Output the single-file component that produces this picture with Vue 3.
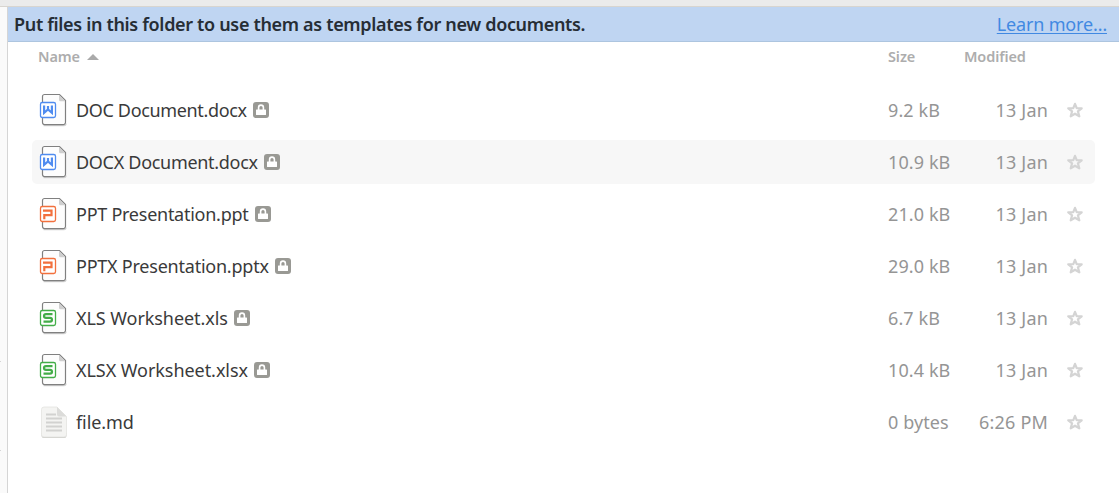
<template>
  <div class="window">
    <div class="toolbar-edge"></div>
    <div class="window-body">
      <aside class="sidebar">
        <span class="sidebar-line"></span>
        <span class="sidebar-line"></span>
      </aside>

      <main class="content">
        <div class="info-bar">
          <span class="info-text">Put files in this folder to use them as templates for new documents.</span>
          <a class="info-link" href="#" @click.prevent>Learn more…</a>
        </div>

        <div class="list-header">
          <div class="header-name">
            <span>Name</span>
            <svg class="sort-arrow" width="12" height="6" viewBox="0 0 12 6"><path d="M0 6L6 0l6 6z" fill="#aaa" /></svg>
          </div>
          <div class="header-size">Size</div>
          <div class="header-modified">Modified</div>
        </div>

        <div class="file-list">
          <div
            v-for="file in files"
            :key="file.name"
            :class="['file-row', hovered === file.name ? 'hover' : '']"
            @mouseenter="hovered = file.name"
          >
            <svg class="file-icon" width="32" height="38" viewBox="0 0 32 38">
              <template v-if="file.type === 'text'">
                <path d="M2.500 30v2.500A2.500 2.500 0 0 0 5 35h20a2.500 2.500 0 0 0 2.500-2.500V30z" fill="#cdcdca" />
                <path d="M5 4h13l9.500 9.500V31.500a2.500 2.500 0 0 1-2.500 2.500H5a2.500 2.500 0 0 1-2.500-2.500v-25A2.500 2.500 0 0 1 5 4z" fill="#f4f4f2" stroke="#e3e3e0" stroke-width=".8" />
                <path d="M18 4l9.500 9.500H20a2 2 0 0 1-2-2z" fill="#dcdcda" />
                <path d="M7 11.500h10M7 15.500h16M7 19.500h16M7 23.500h16M7 27.500h16" stroke="#d2d2d0" stroke-width="1.900" />
              </template>
              <template v-else>
                <path d="M4.500 34.600h20.500a2 2 0 0 0 2-2" fill="none" stroke="#d2d2d2" stroke-width="1.300" />
                <path d="M5.500 3.500H20.500l6 6V31.300a2.300 2.300 0 0 1-2.300 2.300H5.500a2 2 0 0 1-2-2V5.500a2 2 0 0 1 2-2z" fill="#fdfdfd" stroke="#808080" stroke-width="1.200" />
                <path d="M20 4l6.200 6.200h-4.700A1.500 1.500 0 0 1 20 8.700z" fill="#cfcfcf" />
                <rect x="1.500" y="11.500" width="15" height="15" rx="1.800" fill="#fff" :stroke="colors[file.type]" stroke-width="1.300" />
                <path :d="glyphs[file.type]" fill="none" :stroke="colors[file.type]" stroke-width="2.200" />
              </template>
            </svg>
            <div class="file-name">
              <span class="file-label" :style="{ letterSpacing: file.tracking + 'px' }">{{ file.name }}</span>
              <svg v-if="file.locked" class="lock" width="16" height="16" viewBox="0 0 16 16">
                <rect width="16" height="16" rx="3" fill="#999994" />
                <path d="M5.600 8.500V5.500a2.400 2.400 0 0 1 4.800 0v3" fill="none" stroke="#fff" stroke-width="1.600" />
                <rect x="3" y="7.500" width="10" height="5.500" rx=".5" fill="#fff" />
              </svg>
            </div>
            <div class="file-size">{{ file.size }}</div>
            <div class="file-modified">{{ file.modified }}</div>
            <svg class="star" width="16" height="16" viewBox="0 0 16 16">
              <path d="M8 1.800l1.700 4.300 5 .2-3.800 3 1.400 5L8 11.700l-4.300 2.600 1.400-5-3.800-3 5-.2z" fill="none" stroke="#d4d4d4" stroke-width="2.200" stroke-linejoin="round" />
            </svg>
          </div>
        </div>
      </main>
    </div>
  </div>
</template>

<script setup>
import { ref } from 'vue';

const hovered = ref('DOCX Document.docx');

const files = [
  { name: 'DOC Document.docx', type: 'doc', size: '9.2 kB', modified: '13 Jan', locked: true, tracking: -0.35 },
  { name: 'DOCX Document.docx', type: 'doc', size: '10.9 kB', modified: '13 Jan', locked: true, tracking: -0.3 },
  { name: 'PPT Presentation.ppt', type: 'ppt', size: '21.0 kB', modified: '13 Jan', locked: true, tracking: -0.26 },
  { name: 'PPTX Presentation.pptx', type: 'ppt', size: '29.0 kB', modified: '13 Jan', locked: true, tracking: -0.23 },
  { name: 'XLS Worksheet.xls', type: 'xls', size: '6.7 kB', modified: '13 Jan', locked: true, tracking: -0.07 },
  { name: 'XLSX Worksheet.xlsx', type: 'xls', size: '10.4 kB', modified: '13 Jan', locked: true, tracking: -0.06 },
  { name: 'file.md', type: 'text', size: '0 bytes', modified: '6:26 PM', locked: false, tracking: -0.1 }
];

const colors = {
  doc: '#508cf0',
  ppt: '#f2703d',
  xls: '#43ad48'
};

const glyphs = {
  doc: 'M5.100 14.500v7.300l3.900-3.300 3.900 3.300v-7.300M9 15v4.500',
  ppt: 'M4 15.600h8.500v4.600H5.300v4',
  xls: 'M13.500 15.100H7q-2 0-2 1.900T7 18.900h4q2 0 2 1.900T11 22.700H4.500'
};
</script>

<style>
body {
  margin: 0;
  overflow: hidden;
}
</style>

<style scoped>
.window {
  height: 100vh;
  display: flex;
  flex-direction: column;
  background: #fff;
  color: #3a3a3a;
  font-family: "Noto Sans", sans-serif;
  font-size: 18px;
}

.toolbar-edge {
  height: 6px;
  flex: none;
  background: #ebebeb;
  border-bottom: 1px solid #d8d5d0;
}

.window-body {
  flex: 1;
  display: flex;
  min-height: 0;
}

.sidebar {
  width: 7px;
  flex: none;
  background: #fafafa;
  border-right: 1px solid #d5d5d5;
  padding-top: 354px;
}

.sidebar-line {
  display: block;
  width: 1px;
  height: 1px;
  margin-bottom: 88px;
  background: #d5d5d5;
}

.content {
  flex: 1;
  min-width: 0;
}

.info-bar {
  height: 34px;
  display: flex;
  align-items: center;
  justify-content: space-between;
  padding: 0 12px 0 6px;
  background: #bfd5f2;
  border-bottom: 1px solid #adc5df;
  white-space: nowrap;
}

.info-text {
  color: #262d35;
  font-weight: 600;
  letter-spacing: -0.33px;
}

.info-link {
  color: #4189e2;
  letter-spacing: -0.17px;
  text-decoration-thickness: 1px;
  text-underline-offset: 2px;
}

.list-header {
  height: 28px;
  display: grid;
  grid-template-columns: 850px 76px 1fr;
  align-items: center;
  margin-bottom: 2px;
  padding-left: 30px;
  color: #adadad;
  font-size: 14.500px;
  font-weight: 600;
  letter-spacing: -0.1px;
}

.header-name {
  display: flex;
  align-items: center;
  gap: 7px;
}

.sort-arrow {
  margin-top: 2px;
}

.file-list {
  display: flex;
  flex-direction: column;
  gap: 8px;
  padding: 16px 24px 0;
}

.file-row {
  height: 44px;
  display: grid;
  grid-template-columns: 32px 812px 76px 90px 16px;
  align-items: center;
  padding-left: 6px;
  border-radius: 5px;
  white-space: nowrap;
}

.file-icon {
  margin-left: 1px;
}

.file-row.hover {
  background: #f7f7f7;
}

.file-name {
  display: flex;
  align-items: center;
  gap: 6px;
  padding-left: 6px;
}

.file-size,
.file-modified {
  color: #959595;
}

.file-size {
  padding-left: 6px;
  letter-spacing: 0.1px;
}

.file-modified {
  text-align: right;
  letter-spacing: 0.2px;
}

.star {
  margin-left: 19px;
}
</style>
